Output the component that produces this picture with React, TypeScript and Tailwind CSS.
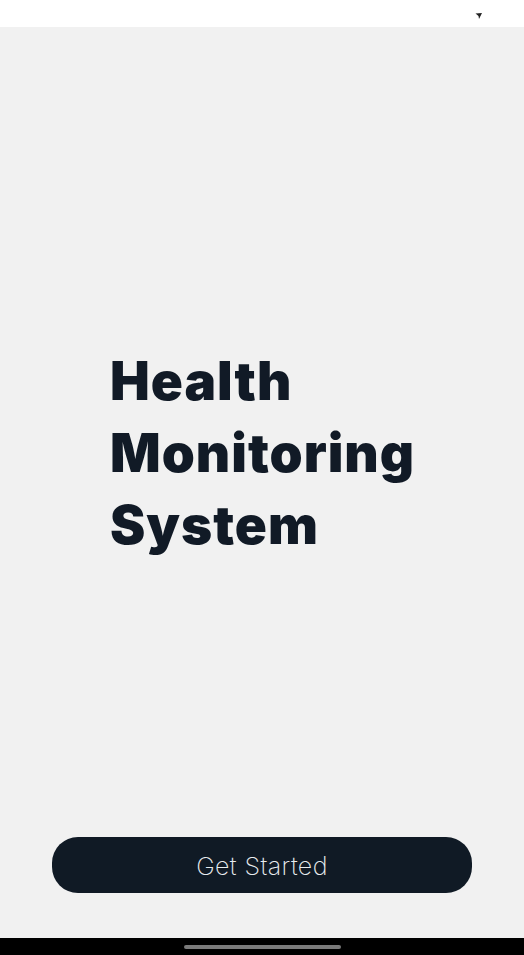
import React from 'react';

export default function App() {
  return (
    <div className="flex h-[955px] w-full flex-col bg-[#f1f1f1] font-['Inter',sans-serif]">
      {/* Status bar */}
      <div className="flex h-[27px] items-center justify-end bg-white pr-[41px]">
        <svg width="8" height="8" viewBox="0 0 8 8" className="mt-[4px]">
          <path d="M0.5 1.5 L7 1 L4 7 L3.5 4 Z" fill="#222" />
        </svg>
      </div>

      {/* Title */}
      <div className="flex flex-1 flex-col justify-center pl-[110px] pt-[42px]">
        <h1 className="text-[53px] font-black leading-[72px] tracking-[1px] text-[#111a26]">
          Health
          <br />
          Monitoring
          <br />
          System
        </h1>
      </div>

      {/* Action */}
      <div className="px-[52px] pb-[45px]">
        <button className="flex h-[56px] w-full items-center justify-center rounded-[26px] bg-[#101a25] pt-[3px] text-[25px] font-extralight tracking-[0.4px] text-[#e8ecef]">
          Get Started
        </button>
      </div>

      {/* Nav bar */}
      <div className="flex h-[17px] items-center justify-center bg-black">
        <div className="h-[4px] w-[157px] rounded-full bg-[#7a7a7a]" />
      </div>
    </div>
  );
}
